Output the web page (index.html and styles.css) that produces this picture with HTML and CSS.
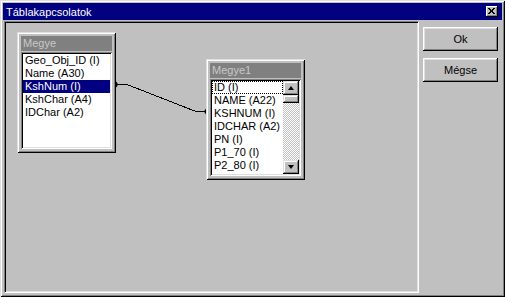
FILE: index.html
```html
<!DOCTYPE html>
<html lang="hu">
<head>
    <meta charset="UTF-8">
    <meta name="viewport" content="width=device-width, initial-scale=1.0">
    <title>Táblakapcsolatok</title>
    <link rel="stylesheet" href="styles.css">
</head>

<body>
    <div class="window">
        <div class="titlebar">
            <span class="title">Táblakapcsolatok</span>
            <span class="close">
                <svg width="7" height="6" viewBox="0 0 7 6">
                    <path d="M0 0h2v1h-2z M5 0h2v1h-2z M1 1h2v1h-2z M4 1h2v1h-2z M2 2h3v2h-3z M1 4h2v1h-2z M4 4h2v1h-2z M0 5h2v1h-2z M5 5h2v1h-2z" fill="#000"/>
                </svg>
            </span>
        </div>

        <div class="body">
            <div class="canvas">
                <!-- kapcsolat vonal Megye.KshNum -> Megye1 -->
                <svg class="links" width="413" height="270">
                    <polyline points="112,62.5 122,62.5 191,89.5 201,89.5" fill="none" stroke="#000" stroke-width="1" shape-rendering="crispEdges"/>
                    <polygon points="110,62.5 111.5,59.5 113,62.5 111.5,65.5" fill="#000"/>
                    <polygon points="199,89.5 201,86.5 203,89.5 201,92.5" fill="#000"/>
                </svg>

                <div class="table table-megye">
                    <div class="table-title">Megye</div>
                    <div class="list">
                        <ul class="fields">
                            <li>Geo_Obj_ID (I)</li>
                            <li>Name (A30)</li>
                            <li class="selected">KshNum (I)</li>
                            <li>KshChar (A4)</li>
                            <li>IDChar (A2)</li>
                        </ul>
                    </div>
                </div>

                <div class="table table-megye1">
                    <div class="table-title">Megye1</div>
                    <div class="list">
                        <ul class="fields">
                            <li class="focus">ID (I)</li>
                            <li>NAME (A22)</li>
                            <li>KSHNUM (I)</li>
                            <li>IDCHAR (A2)</li>
                            <li>PN (I)</li>
                            <li>P1_70 (I)</li>
                            <li>P2_80 (I)</li>
                        </ul>
                        <div class="scrollbar">
                            <div class="sb-btn"><span class="arrow-up"></span></div>
                            <div class="sb-thumb"></div>
                            <div class="sb-track"></div>
                            <div class="sb-btn"><span class="arrow-down"></span></div>
                        </div>
                    </div>
                </div>
            </div>

            <div class="buttons">
                <button class="btn">Ok</button>
                <button class="btn">Mégse</button>
            </div>
        </div>
    </div>
</body>
</html>
```

FILE: styles.css
```css
* {
    box-sizing: border-box;
}

body {
    margin: 0;
    font-family: "Liberation Sans", Arial, sans-serif;
    font-size: 11px;
    background-color: #c0c0c0;
}

.window {
    width: 505px;
    height: 297px;
    padding: 3px;
    background-color: #c0c0c0;
    box-shadow: inset 1px 1px #dfdfdf, inset -1px -1px #000,
        inset 2px 2px #fff, inset -2px -2px #808080;
    display: flex;
    flex-direction: column;
}

.titlebar {
    height: 17px;
    margin-bottom: 1px;
    padding: 0 4px 0 3px;
    background-color: #000080;
    color: #fff;
    display: flex;
    align-items: center;
    justify-content: space-between;
}

.close {
    width: 12px;
    height: 11px;
    background-color: #c0c0c0;
    box-shadow: inset -1px -1px #000, inset 1px 1px #fff, inset -2px -2px #808080;
    display: flex;
    align-items: center;
    justify-content: center;
    padding: 0 1px 1px 0;
}

.close svg {
    display: block;
}

.body {
    flex: 1;
    display: flex;
}

.canvas {
    position: relative;
    width: 415px;
    height: 272px;
    margin-left: 1px;
    border: 1px solid;
    border-color: #808080 #fff #fff #808080;
    box-shadow: inset 1px 1px #000, inset -1px -1px #dfdfdf;
}

.links {
    position: absolute;
    left: 0;
    top: 0;
}

/* tabla ablakok */
.table {
    position: absolute;
    width: 99px;
    height: 121px;
    padding: 4px;
    background-color: #c0c0c0;
    box-shadow: inset 1px 1px #dfdfdf, inset -1px -1px #000,
        inset 2px 2px #fff, inset -2px -2px #808080;
    display: flex;
    flex-direction: column;
}

.table-megye {
    left: 12px;
    top: 10px;
}

.table-megye1 {
    left: 201px;
    top: 37px;
}

.table-title {
    flex: none;
    height: 15px;
    line-height: 15px;
    padding-left: 2px;
    background-color: #808080;
    color: #c8c8c8;
}

.list {
    flex: 1;
    margin-top: 1px;
    padding: 2px;
    background-color: #fff;
    box-shadow: inset 1px 1px #808080, inset -1px -1px #fff,
        inset 2px 2px #000, inset -2px -2px #dfdfdf;
    display: flex;
    overflow: hidden;
}

.fields {
    flex: 1;
    list-style: none;
    margin: 0;
    padding: 0;
}

.fields li {
    height: 13px;
    line-height: 13px;
    padding-left: 2px;
    white-space: nowrap;
    color: #000;
}

.fields li.selected {
    background-color: #000080;
    color: #fff;
}

.fields li.focus {
    outline: 1px dotted #000;
    outline-offset: -1px;
}

.scrollbar {
    width: 16px;
    display: flex;
    flex-direction: column;
    background: repeating-conic-gradient(#c0c0c0 0 25%, #fff 0 50%) 0 0 / 2px 2px;
}

.sb-btn,
.sb-thumb {
    background-color: #c0c0c0;
    box-shadow: inset -1px -1px #000, inset 1px 1px #dfdfdf,
        inset -2px -2px #808080, inset 2px 2px #fff;
}

.sb-btn {
    height: 14px;
    display: flex;
    align-items: center;
    justify-content: center;
}

.sb-thumb {
    height: 8px;
}

.sb-track {
    flex: 1;
}

.arrow-up,
.arrow-down {
    width: 0;
    height: 0;
    border-left: 3.5px solid transparent;
    border-right: 3.5px solid transparent;
}

.arrow-up {
    border-bottom: 4px solid #000;
}

.arrow-down {
    border-top: 4px solid #000;
}

/* gombok */
.buttons {
    display: flex;
    flex-direction: column;
    gap: 7px;
    margin-left: 4px;
    padding-top: 6px;
}

.btn {
    width: 75px;
    height: 24px;
    padding: 0;
    border: none;
    font: inherit;
    color: #000;
    background-color: #c0c0c0;
    box-shadow: inset -1px -1px #000, inset 1px 1px #fff,
        inset -2px -2px #808080, inset 2px 2px #dfdfdf;
}
```
